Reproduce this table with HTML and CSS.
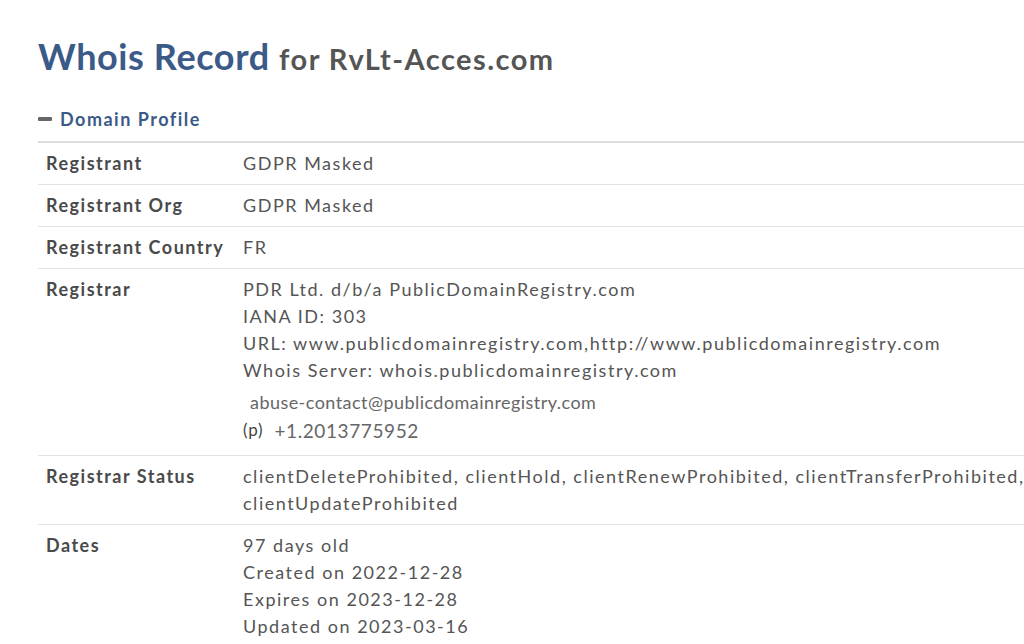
FILE: index.html
```html
<!DOCTYPE html>
<html>
<head>
<meta charset="utf-8">
<link rel="stylesheet" href="styles.css">
</head>
<body>
<div class="page">
  <h1 class="title"><span class="main">Whois Record</span> <span class="sub">for RvLt-Acces.com</span></h1>
  <div class="section-head"><span class="minus"></span><span>Domain Profile</span></div>
  <div class="table">
    <div class="row">
      <div class="label">Registrant</div>
      <div class="value">GDPR Masked</div>
    </div>
    <div class="row">
      <div class="label">Registrant Org</div>
      <div class="value">GDPR Masked</div>
    </div>
    <div class="row">
      <div class="label">Registrant Country</div>
      <div class="value">FR</div>
    </div>
    <div class="row">
      <div class="label">Registrar</div>
      <div class="value">
        <div>PDR Ltd. d/b/a PublicDomainRegistry.com</div>
        <div>IANA ID: 303</div>
        <div>URL: www.publicdomainregistry.com,http://www.publicdomainregistry.com</div>
        <div>Whois Server: whois.publicdomainregistry.com</div>
        <div class="img-text email">abuse-contact@publicdomainregistry.com</div>
        <div class="phone"><span class="p">(p)</span><span class="img-text">+1.2013775952</span></div>
      </div>
    </div>
    <div class="row">
      <div class="label">Registrar Status</div>
      <div class="value nowrap">
        <div>clientDeleteProhibited, clientHold, clientRenewProhibited, clientTransferProhibited,</div>
        <div>clientUpdateProhibited</div>
      </div>
    </div>
    <div class="row">
      <div class="label">Dates</div>
      <div class="value">
        <div>97 days old</div>
        <div>Created on 2022-12-28</div>
        <div>Expires on 2023-12-28</div>
        <div>Updated on 2023-03-16</div>
      </div>
    </div>
  </div>
</div>
</body>
</html>
```
FILE: styles.css
```css
html, body {
  margin: 0;
  padding: 0;
  background: #fff;
  overflow: hidden;
}
body {
  font-family: Lato, "Liberation Sans", sans-serif;
  width: 1024px;
  height: 644px;
}
.page {
  padding: 34px 0 0 38px;
  width: 1100px;
}
.title {
  margin: 0;
  font-weight: 700;
  line-height: 44px;
  letter-spacing: 0.6px;
}
.title .main {
  font-size: 36px;
  color: #3b5a87;
}
.title .sub {
  font-size: 29px;
  color: #555;
  letter-spacing: 1.45px;
  margin-left: 1px;
}
.section-head {
  display: flex;
  align-items: center;
  margin-top: 27px;
  font-size: 18px;
  font-weight: 700;
  color: #3b5a87;
  letter-spacing: 1.5px;
  height: 22px;
}
.minus {
  display: inline-block;
  width: 14px;
  height: 4px;
  background: #666;
  margin-right: 8px;
  border-radius: 1px;
}
.table {
  margin-top: 11px;
  border-top: 2px solid #ddd;
  width: 1100px;
}
.row {
  display: flex;
  border-bottom: 1px solid #e3e3e3;
  padding: 7px 0 7px;
  font-size: 18px;
  line-height: 27px;
  letter-spacing: 1.52px;
}
.label {
  width: 197px;
  padding-left: 8px;
  flex-shrink: 0;
  font-weight: 700;
  color: #4a4a4a;
  letter-spacing: 1.5px;
}
.value {
  color: #555;
  white-space: nowrap;
}
.img-text {
  font-size: 18px;
  letter-spacing: 0.45px;
  color: #666;
}
.email {
  padding-left: 7px;
  margin-top: 5px;
  line-height: 26px;
}
.phone {
  display: flex;
  align-items: baseline;
  line-height: 32px;
}
.phone .p {
  font-size: 17px;
  letter-spacing: 0.8px;
  color: #444;
  margin-right: 11px;
  position: relative;
  top: -2px;
}
.phone .img-text {
  font-size: 19px;
  letter-spacing: 0.6px;
}
```
